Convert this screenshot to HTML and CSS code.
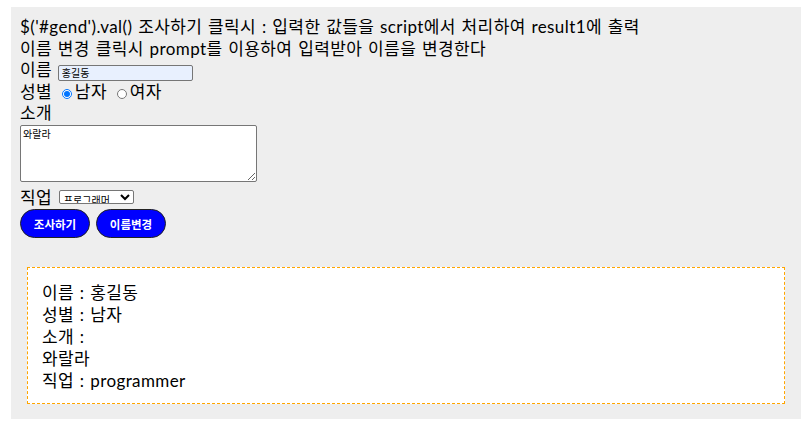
FILE: index.html
```html
<!DOCTYPE html>
<html lang="ko">
<head>
<meta charset="utf-8">
<title>form</title>
<link rel="stylesheet" href="styles.css">
</head>
<body>
<div class="panel">
  <div class="line">$('#gend').val() 조사하기 클릭시 : 입력한 값들을 script에서 처리하여 result1에 출력</div>
  <div class="line">이름 변경 클릭시 prompt를 이용하여 입력받아 이름을 변경한다</div>
  <div class="line">이름 <input class="name-input" type="text" value="홍길동"></div>
  <div class="line">성별 <label class="opt"><input class="radio" type="radio" name="gend" checked>남자</label> <label class="opt"><input class="radio" type="radio" name="gend">여자</label></div>
  <div class="line">소개</div>
  <textarea class="intro">와랄라</textarea>
  <div class="line job">직업 <select class="job-select"><option>프로그래머</option></select></div>
  <div class="buttons">
    <button class="btn" type="button">조사하기</button>
    <button class="btn" type="button">이름변경</button>
  </div>
  <div class="result">
    <div>이름 : 홍길동</div>
    <div>성별 : 남자</div>
    <div>소개 : </div>
    <div>와랄라</div>
    <div>직업 : programmer</div>
  </div>
</div>
</body>
</html>
```
FILE: styles.css
```css
html, body {
  margin: 0;
  padding: 0;
  background: #ffffff;
}
body {
  font-family: Lato, "Noto Sans CJK KR", sans-serif;
  font-size: 17px;
  letter-spacing: 0.4px;
  word-spacing: 1px;
  color: #000;
}
.panel {
  box-sizing: border-box;
  width: 790px;
  height: 412px;
  margin: 7px 0 0 11px;
  padding: 9px 9px;
  background: #eeeeee;
}
.line {
  line-height: 21.5px;
  white-space: nowrap;
}
.name-input {
  box-sizing: border-box;
  width: 135px;
  height: 16px;
  padding: 0 3px;
  margin: 0;
  font-family: "Noto Sans CJK KR", sans-serif;
  font-size: 10px;
  letter-spacing: 0;
  background: #e8f0fe;
  border: 1px solid #767676;
  border-radius: 2px;
  vertical-align: -1px;
}
.opt {
  display: inline;
}
.radio {
  width: 10px;
  height: 10px;
  margin: 0 3px 0 4px;
  vertical-align: -1px;
}
.intro {
  display: block;
  box-sizing: border-box;
  width: 237px;
  height: 57px;
  margin: 1px 0 5px 0;
  padding: 1px 2px;
  font-family: "Noto Sans CJK KR", sans-serif;
  font-size: 10px;
  line-height: 13px;
  letter-spacing: 0;
  border: 1px solid #767676;
  border-radius: 2px;
  background: #fff;
  resize: both;
}
.job-select {
  box-sizing: border-box;
  width: 75px;
  height: 14px;
  padding: 0;
  margin: 0 0 0 1px;
  font-family: "Noto Sans CJK KR", sans-serif;
  font-size: 10px;
  letter-spacing: 0;
  border: 1px solid #767676;
  border-radius: 2px;
  background: #fff;
  vertical-align: 0;
}
.buttons {
  display: flex;
  gap: 6px;
  margin-top: 1px;
}
.btn {
  box-sizing: border-box;
  width: 70px;
  height: 29px;
  padding: 0;
  border: 1px solid #222;
  border-radius: 15px;
  background: #0000ff;
  color: #ffffff;
  font-family: "Noto Sans CJK KR", sans-serif;
  font-weight: bold;
  font-size: 11.5px;
  letter-spacing: 0;
}
.result {
  margin: 29px 7px 0 7px;
  padding: 14px 14px 11px;
  background: #ffffff;
  border: 1px dashed #ffa500;
  line-height: 22px;
}
```
